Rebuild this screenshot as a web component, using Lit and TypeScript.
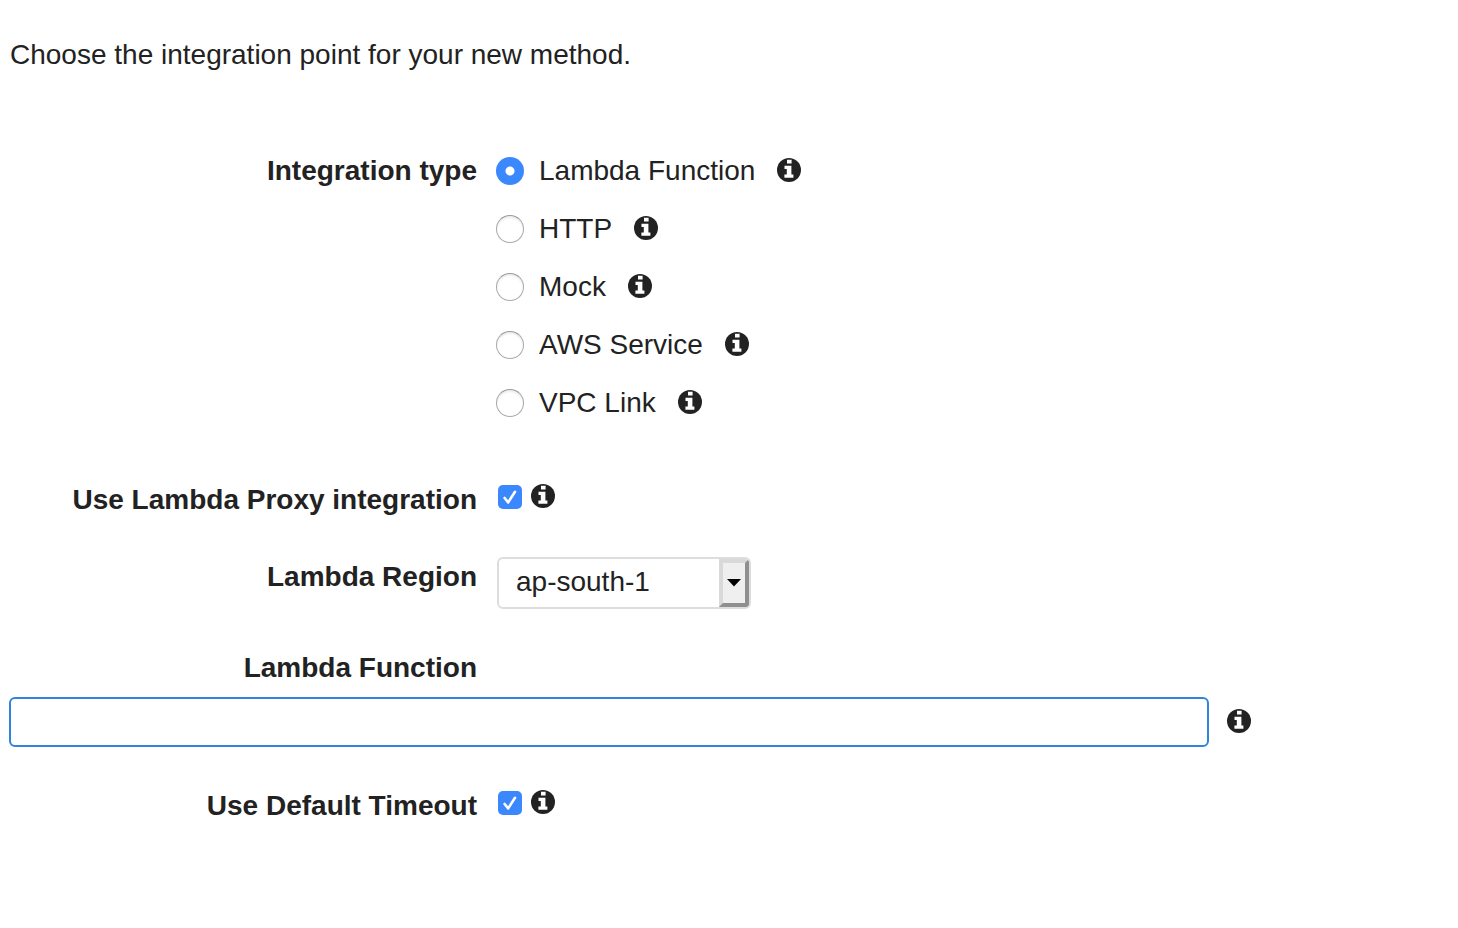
import { LitElement, html, css } from "lit";
import { customElement, state } from "lit/decorators.js";

@customElement("info-icon")
class InfoIcon extends LitElement {
  static styles = css`
    :host {
      display: block;
      flex: none;
      width: 24px;
      height: 24px;
    }
    .icon {
      display: block;
    }
  `;

  render() {
    return html`
      <svg class="icon" width="24" height="24" viewBox="0 0 24 24" role="img" aria-label="Information">
        <circle cx="12" cy="12" r="12" fill="#222" />
        <path fill="#fff" d="M10 1.8h4.6v3.8H10zM7.5 7.7h6.9v8.8h2v3.2h-9v-3.2h2.4v-5.6H7.5z" />
      </svg>
    `;
  }
}

@customElement("app-root")
class AppRoot extends LitElement {
  static styles = css`
    :host {
      display: block;
      background: #fff;
      color: #222;
      font-family: "Liberation Sans", Arial, sans-serif;
      font-size: 28px;
      line-height: 40px;
    }
    * {
      box-sizing: border-box;
    }
    .page {
      padding: 35px 10px;
    }
    .intro {
      margin: 0 0 76px;
    }
    .row {
      display: grid;
      grid-template-columns: minmax(0, 467px) minmax(0, 1fr);
      column-gap: 20px;
      align-items: start;
    }
    .label {
      font-weight: bold;
      text-align: right;
    }
    .types {
      display: grid;
      row-gap: 18px;
      margin-bottom: 57px;
    }
    .type {
      display: flex;
      align-items: center;
      gap: 22px;
    }
    .type info-icon,
    .tick info-icon,
    .entry info-icon {
      margin-bottom: 2px;
    }
    .choice {
      display: flex;
      align-items: center;
      gap: 15px;
    }
    .radio {
      appearance: none;
      flex: none;
      width: 28px;
      height: 28px;
      margin: 0 0 0 -1px;
      border: 1px solid #aaa;
      border-top-color: #999;
      border-radius: 50%;
      background: #fff;
      box-shadow: inset 0 2px 2px #eee;
    }
    .radio:checked {
      border: 0;
      background: radial-gradient(circle, #fff 0 4px, #3b87fd 5px);
      box-shadow: none;
    }
    .tick {
      display: flex;
      align-items: center;
      gap: 9px;
      height: 34px;
      padding-left: 1px;
    }
    .proxy {
      margin-bottom: 37px;
    }
    .check {
      display: grid;
      width: 24px;
      height: 24px;
    }
    .box,
    .mark {
      grid-area: 1 / 1;
    }
    .box {
      appearance: none;
      width: 24px;
      height: 24px;
      margin: 0;
      border-radius: 5px;
      border: 1px solid #999;
      background: #fff;
    }
    .box:checked {
      border: 0;
      background: #3b87fd;
    }
    .mark {
      pointer-events: none;
      visibility: hidden;
    }
    .box:checked + .mark {
      visibility: visible;
    }
    .region {
      margin-bottom: 39px;
    }
    .combo {
      display: grid;
      width: 254px;
      max-width: 100%;
    }
    .select,
    .drop {
      grid-area: 1 / 1;
    }
    .select {
      appearance: none;
      width: 100%;
      height: 52px;
      padding: 0 32px 2px 17px;
      border: 2px solid #ddd;
      border-radius: 6px;
      background: #fff;
      color: inherit;
      font: inherit;
    }
    .drop {
      display: grid;
      place-items: center;
      justify-self: end;
      align-self: center;
      width: 30px;
      height: 48px;
      margin-right: 2px;
      border: 4px solid;
      border-color: #d9d9d9 #8f8f8f #8f8f8f #d9d9d9;
      border-radius: 0 4px 4px 0;
      background: #efefef;
      pointer-events: none;
    }
    .entry {
      display: flex;
      align-items: center;
      gap: 18px;
      margin: 9px 0 39px -1px;
    }
    .input {
      flex: 0 1 1200px;
      min-width: 0;
      height: 50px;
      padding: 0 16px;
      border: 2px solid #3184dc;
      border-radius: 6px;
      outline: none;
      background: #fff;
      color: inherit;
      font: inherit;
    }
  `;

  @state() private type = "Lambda Function";

  private types = ["Lambda Function", "HTTP", "Mock", "AWS Service", "VPC Link"];

  private tick(id: string) {
    return html`
      <div class="tick">
        <span class="check">
          <input class="box" type="checkbox" id=${id} checked />
          <svg class="mark" width="24" height="24" viewBox="0 0 24 24" aria-hidden="true">
            <path d="M6.6 13l3.6 4.4L17 6.8" fill="none" stroke="#fff" stroke-width="2.6" stroke-linecap="round" stroke-linejoin="round" />
          </svg>
        </span>
        <info-icon></info-icon>
      </div>
    `;
  }

  render() {
    return html`
      <main class="page">
        <p class="intro">Choose the integration point for your new method.</p>
        <form>
          <div class="row" role="radiogroup" aria-labelledby="type-label">
            <span class="label" id="type-label">Integration type</span>
            <div class="types">
              ${this.types.map(
                (name) => html`
                  <div class="type">
                    <label class="choice">
                      <input
                        class="radio"
                        type="radio"
                        name="type"
                        .checked=${this.type === name}
                        @change=${() => (this.type = name)}
                      />
                      ${name}
                    </label>
                    <info-icon></info-icon>
                  </div>
                `
              )}
            </div>
          </div>
          <div class="row proxy">
            <label class="label" for="proxy">Use Lambda Proxy integration</label>
            ${this.tick("proxy")}
          </div>
          <div class="row region">
            <label class="label" for="region">Lambda Region</label>
            <div class="combo">
              <select class="select" id="region">
                <option>ap-south-1</option>
              </select>
              <span class="drop">
                <svg width="14" height="8" viewBox="0 0 14 8" aria-hidden="true">
                  <path d="M0 0h14L7 7.5z" fill="#000" />
                </svg>
              </span>
            </div>
          </div>
          <div class="row">
            <label class="label" for="function">Lambda Function</label>
          </div>
          <div class="entry">
            <input class="input" type="text" id="function" />
            <info-icon></info-icon>
          </div>
          <div class="row">
            <label class="label" for="timeout">Use Default Timeout</label>
            ${this.tick("timeout")}
          </div>
        </form>
      </main>
    `;
  }
}
